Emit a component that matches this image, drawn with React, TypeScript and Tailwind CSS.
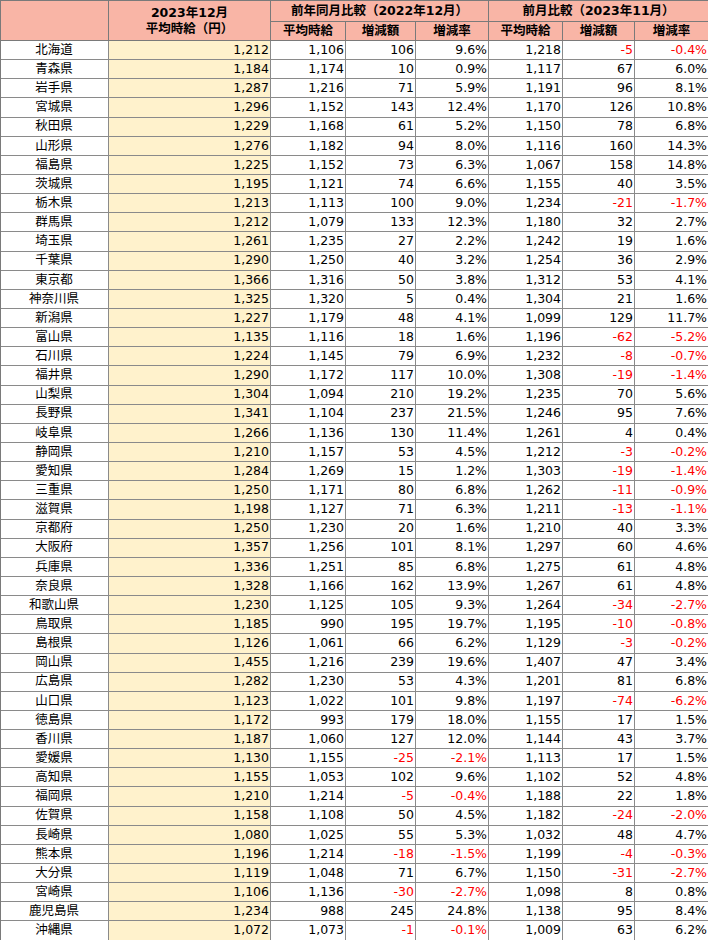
const rows: [string, string, string, string, string, string, string, string][] = [
  ["北海道", "1,212", "1,106", "106", "9.6%", "1,218", "-5", "-0.4%"],
  ["青森県", "1,184", "1,174", "10", "0.9%", "1,117", "67", "6.0%"],
  ["岩手県", "1,287", "1,216", "71", "5.9%", "1,191", "96", "8.1%"],
  ["宮城県", "1,296", "1,152", "143", "12.4%", "1,170", "126", "10.8%"],
  ["秋田県", "1,229", "1,168", "61", "5.2%", "1,150", "78", "6.8%"],
  ["山形県", "1,276", "1,182", "94", "8.0%", "1,116", "160", "14.3%"],
  ["福島県", "1,225", "1,152", "73", "6.3%", "1,067", "158", "14.8%"],
  ["茨城県", "1,195", "1,121", "74", "6.6%", "1,155", "40", "3.5%"],
  ["栃木県", "1,213", "1,113", "100", "9.0%", "1,234", "-21", "-1.7%"],
  ["群馬県", "1,212", "1,079", "133", "12.3%", "1,180", "32", "2.7%"],
  ["埼玉県", "1,261", "1,235", "27", "2.2%", "1,242", "19", "1.6%"],
  ["千葉県", "1,290", "1,250", "40", "3.2%", "1,254", "36", "2.9%"],
  ["東京都", "1,366", "1,316", "50", "3.8%", "1,312", "53", "4.1%"],
  ["神奈川県", "1,325", "1,320", "5", "0.4%", "1,304", "21", "1.6%"],
  ["新潟県", "1,227", "1,179", "48", "4.1%", "1,099", "129", "11.7%"],
  ["富山県", "1,135", "1,116", "18", "1.6%", "1,196", "-62", "-5.2%"],
  ["石川県", "1,224", "1,145", "79", "6.9%", "1,232", "-8", "-0.7%"],
  ["福井県", "1,290", "1,172", "117", "10.0%", "1,308", "-19", "-1.4%"],
  ["山梨県", "1,304", "1,094", "210", "19.2%", "1,235", "70", "5.6%"],
  ["長野県", "1,341", "1,104", "237", "21.5%", "1,246", "95", "7.6%"],
  ["岐阜県", "1,266", "1,136", "130", "11.4%", "1,261", "4", "0.4%"],
  ["静岡県", "1,210", "1,157", "53", "4.5%", "1,212", "-3", "-0.2%"],
  ["愛知県", "1,284", "1,269", "15", "1.2%", "1,303", "-19", "-1.4%"],
  ["三重県", "1,250", "1,171", "80", "6.8%", "1,262", "-11", "-0.9%"],
  ["滋賀県", "1,198", "1,127", "71", "6.3%", "1,211", "-13", "-1.1%"],
  ["京都府", "1,250", "1,230", "20", "1.6%", "1,210", "40", "3.3%"],
  ["大阪府", "1,357", "1,256", "101", "8.1%", "1,297", "60", "4.6%"],
  ["兵庫県", "1,336", "1,251", "85", "6.8%", "1,275", "61", "4.8%"],
  ["奈良県", "1,328", "1,166", "162", "13.9%", "1,267", "61", "4.8%"],
  ["和歌山県", "1,230", "1,125", "105", "9.3%", "1,264", "-34", "-2.7%"],
  ["鳥取県", "1,185", "990", "195", "19.7%", "1,195", "-10", "-0.8%"],
  ["島根県", "1,126", "1,061", "66", "6.2%", "1,129", "-3", "-0.2%"],
  ["岡山県", "1,455", "1,216", "239", "19.6%", "1,407", "47", "3.4%"],
  ["広島県", "1,282", "1,230", "53", "4.3%", "1,201", "81", "6.8%"],
  ["山口県", "1,123", "1,022", "101", "9.8%", "1,197", "-74", "-6.2%"],
  ["徳島県", "1,172", "993", "179", "18.0%", "1,155", "17", "1.5%"],
  ["香川県", "1,187", "1,060", "127", "12.0%", "1,144", "43", "3.7%"],
  ["愛媛県", "1,130", "1,155", "-25", "-2.1%", "1,113", "17", "1.5%"],
  ["高知県", "1,155", "1,053", "102", "9.6%", "1,102", "52", "4.8%"],
  ["福岡県", "1,210", "1,214", "-5", "-0.4%", "1,188", "22", "1.8%"],
  ["佐賀県", "1,158", "1,108", "50", "4.5%", "1,182", "-24", "-2.0%"],
  ["長崎県", "1,080", "1,025", "55", "5.3%", "1,032", "48", "4.7%"],
  ["熊本県", "1,196", "1,214", "-18", "-1.5%", "1,199", "-4", "-0.3%"],
  ["大分県", "1,119", "1,048", "71", "6.7%", "1,150", "-31", "-2.7%"],
  ["宮崎県", "1,106", "1,136", "-30", "-2.7%", "1,098", "8", "0.8%"],
  ["鹿児島県", "1,234", "988", "245", "24.8%", "1,138", "95", "8.4%"],
  ["沖縄県", "1,072", "1,073", "-1", "-0.1%", "1,009", "63", "6.2%"],
];

const head = "flex items-center justify-center border-r border-b border-[#7a7a7a] bg-[#f9b5a6] font-bold text-[12.5px]";

export default function App() {
  return (
    <div
      className="w-[708px] overflow-hidden bg-white text-black"
      style={{ fontFamily: '"DejaVu Sans", "Noto Sans CJK JP", sans-serif' }}
    >
      <div className="grid grid-cols-[108px_162px_75px_70px_73px_74px_72px_74px] grid-rows-[21px_19px] border-t border-l border-[#7a7a7a] leading-none">
        <div className={`${head} row-span-2`} />
        <div className={`${head} row-span-2 flex-col gap-[4px] pt-[1px]`}>
          <span>2023年12月</span>
          <span>平均時給（円）</span>
        </div>
        <div className={`${head} col-span-3`}>前年同月比較（2022年12月）</div>
        <div className={`${head} col-span-3`}>前月比較（2023年11月）</div>
        <div className={head}>平均時給</div>
        <div className={head}>増減額</div>
        <div className={head}>増減率</div>
        <div className={head}>平均時給</div>
        <div className={head}>増減額</div>
        <div className={head}>増減率</div>
      </div>
      <div className="grid grid-cols-[108px_162px_75px_70px_73px_74px_72px_74px] auto-rows-[19.15px] border-l border-[#7a7a7a] text-[12.5px] leading-none">
        {rows.map((r) => (
          <Row key={r[0]} r={r} />
        ))}
      </div>
    </div>
  );
}

function Row({ r }: { r: string[] }) {
  const cell = "flex items-center border-r border-b border-[#8a8a8a] pr-[1px]";
  return (
    <>
      <div className={`${cell} justify-center`}>{r[0]}</div>
      <div className={`${cell} justify-end bg-[#fff2cc]`}>{r[1]}</div>
      {r.slice(2).map((v, i) => (
        <div
          key={i}
          className={`${cell} justify-end ${v.startsWith("-") ? "text-[#ff0000]" : ""}`}
        >
          {v}
        </div>
      ))}
    </>
  );
}
